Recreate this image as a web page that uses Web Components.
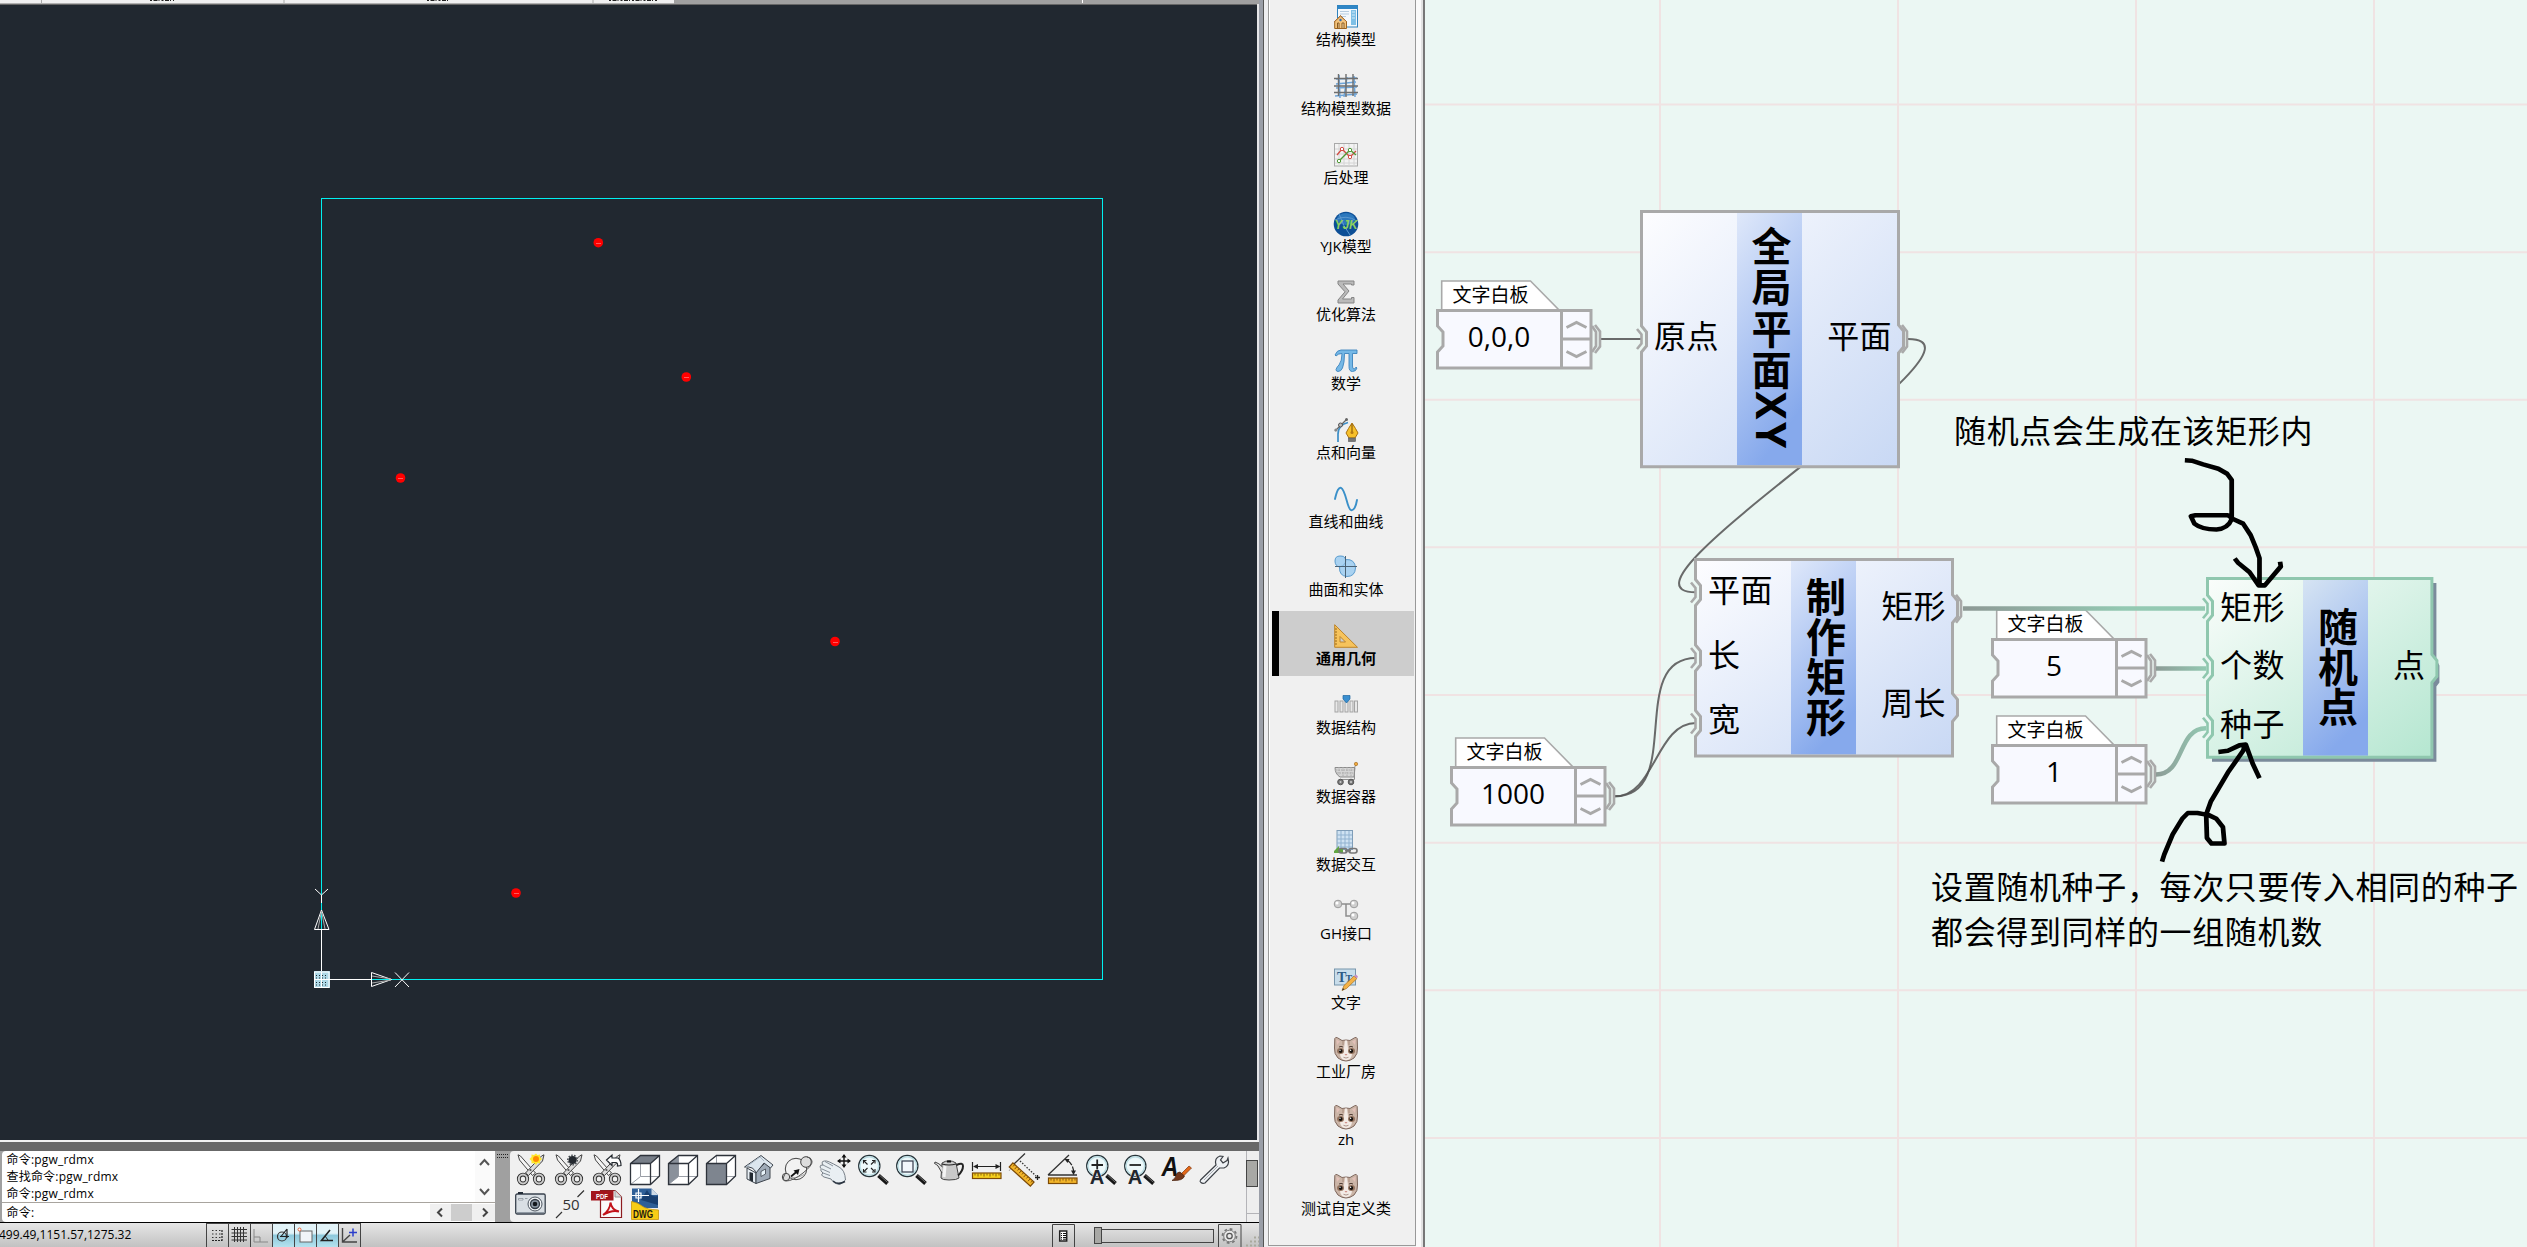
<!DOCTYPE html>
<html lang="zh-CN">
<head>
<meta charset="utf-8">
<title>随机点</title>
<style>
html,body{margin:0;padding:0;height:1247px;overflow:hidden;background:#f0f0f0}
body{font-family:"Open Sans","Noto Sans CJK SC",sans-serif;color:#000}
</style>
</head>
<body>
<app-shell></app-shell>
<script>
const define=(name,html,setup)=>customElements.define(name,class extends HTMLElement{
  connectedCallback(){
    if(this.shadowRoot)return;
    const r=this.attachShadow({mode:'open'});
    r.innerHTML=typeof html==='function'?html(this):html;
    if(setup)setup(this,r);
  }
});

/* ---------- icons ---------- */
const cat=`<path d="M.8 1.500Q1.500-.3 3.500 .8L8 3.500Q12 2.500 16 3.500L20.500 .8Q22.500-.3 23.200 1.500L23.500 11Q24 17 20 21Q16 24 12 24Q8 24 4 21Q0 17 .5 11Z" fill="#cbb5a7" stroke="#7d665c" stroke-width="1"/><path d="M2.300 2.500L6 4.500L3 8ZM21.700 2.500L18 4.500L21 8Z" fill="#e2c0b8"/><path d="M11 3.500H13L14 11Q15 15 18 17.500Q17 23 12 23.300Q7 23 6 17.500Q9 15 10 11Z" fill="#f3ebe6"/><path d="M9 3.500V8M15 3.500V8" stroke="#a58a7b" stroke-width="1"/><ellipse cx="6.500" cy="14" rx="3.500" ry="3" fill="#94745f"/><ellipse cx="17.500" cy="14" rx="3.500" ry="3" fill="#94745f"/><circle cx="6.700" cy="14" r="1.900" fill="#16110e"/><circle cx="17.300" cy="14" r="1.900" fill="#16110e"/><circle cx="6" cy="13.200" r=".7" fill="#fff"/><circle cx="16.600" cy="13.200" r=".7" fill="#fff"/><path d="M5 10Q7 8.800 9 10M15 10Q17 8.800 19 10" stroke="#4f3c33" fill="none" stroke-width="1"/><path d="M10.500 17H13.500L12 18.700Z" fill="#d08a84"/><path d="M9.500 20.300Q12 21.800 14.500 20.300" stroke="#a48a80" fill="none" stroke-width=".9"/>`;
const side={
model:`<rect x="3.500" y=".5" width="20" height="21.500" fill="#f4f9fd" stroke="#2f82bd"/><rect x="3.500" y=".5" width="20" height="3.500" fill="#2f86c6"/><path d="M6 6.500H15M6 9H15M6 11.500H12" stroke="#b7cde0"/><rect x="17" y="5" width="5" height="15" fill="#7fc0e6"/><path d="M18 7H21M18 10H21M18 13H21" stroke="#d4ecf9"/><path d="M.7 23.500V16.500L6.500 11L12.500 16.500V23.500Z" fill="#f3c37c" stroke="#9c6420"/><path d="M0 17L6.500 10.500L13 17" stroke="#a9713a" fill="none"/><path d="M3.500 23V18H5V23M8 23V18H10V23" stroke="#8a5a20" fill="#f9e0b0"/><circle cx="6.500" cy="15" r="1.200" fill="#2c68b0"/>`,
grid:`<path d="M2 5L23 4M2 14L23 13M1 22L23 20M5 1L6 24M13 3L10 23M20 2L21 23M2 10L22 8" stroke="#6da4d8" stroke-width="1.500"/><path d="M4.500 0V22M12 0V23M19 0V22M0 4.500H24M0 12H24M0 18.500H24" stroke="#6e6e6e" stroke-width="1.400"/>`,
post:`<rect x=".5" y=".5" width="23" height="22.500" fill="#f3f3f3" stroke="#a9a9a9"/><path d="M5 1V23M10 1V23M15 1V23M20 1V23M1 6H23M1 11H23M1 16H23M1 20H23" stroke="#d4d4d4"/><path d="M3 12L8 6L16 14L22 8" stroke="#d24b44" fill="none" stroke-width="1.300"/><path d="M5 18L16 7L22 12" stroke="#4f9a35" fill="none" stroke-width="1.300"/><g fill="#fff"><circle cx="8" cy="6" r="1.700" stroke="#d24b44"/><circle cx="16" cy="14" r="1.700" stroke="#d24b44"/><circle cx="5" cy="18" r="1.700" stroke="#4f9a35"/><circle cx="16" cy="7" r="1.700" stroke="#4f9a35"/></g>`,
yjk:`<circle cx="12" cy="12" r="12.300" fill="#0d4f96"/><ellipse cx="12" cy="7" rx="9" ry="6" fill="#2c78bd"/><path d="M1 8Q12 2 23 9M5 2Q9 14 16 23" stroke="#5b98cf" fill="none"/><text x="12" y="16.500" text-anchor="middle" textLength="23" lengthAdjust="spacingAndGlyphs" font-family="Liberation Sans" font-style="italic" font-weight="700" font-size="13" fill="#8ed05f">YJK</text>`,
sigma:`<path d="M4 1H20V5H17.500V4H9L15 11L8.500 19H17.500V17.500H20V23H4V20L11 11.800L4 4Z" fill="#bababa" stroke="#858585"/>`,
pi:`<path d="M1 6Q3 1 7 1H23V4.500H18.500V17Q18.500 20 20 20Q21.500 20 22 18L23 19Q22 22.500 18.500 22.500Q15 22.500 15 17.500V4.500H10.500Q10.500 14 8.500 19Q7 22.500 4 22.500Q2 22.500 2 20.500Q3 17.500 5 16Q8 12 8 4.500Q4 4.500 2 7Z" fill="#75b8e6" stroke="#3c83bd" stroke-width=".9"/>`,
pen:`<path d="M4 24V16Q4 7 14 4.500" stroke="#3c8ec7" fill="none" stroke-width="1.700"/><path d="M1 13L13 1" stroke="#666" stroke-width="1.300"/><circle cx="1.800" cy="12" r="1.500" fill="#888"/><circle cx="6.500" cy="7" r="2" fill="#bbb" stroke="#555"/><circle cx="12.500" cy="1.500" r="1.500" fill="#666"/><path d="M18 5Q22 11 24 15L21 20H15L12 15Q14 11 18 5Z" fill="#f7c02b" stroke="#a9700f"/><path d="M18 6V14" stroke="#7a4d06"/><circle cx="18" cy="14.500" r="1.500" fill="#b57a14"/><rect x="14.500" y="20" width="7" height="3.500" fill="#777" stroke="#555" stroke-width=".6"/>`,
sine:`<path d="M1 12C3 3 5 0 7 .8C12 3 13 22 17 23.200C20 24 22 19 23 13" stroke="#3a90c9" fill="none" stroke-width="1.900" stroke-linecap="round"/>`,
solid:`<path d="M1 6Q1 1 6 1Q10 0 12 4.500Q21 4 21.500 13Q21 21.500 13 21.500Q5 21 5.500 12Q1 11 1 6Z" fill="#a9d2f1" stroke="#5a9cce"/><path d="M6 12Q12 10 12 4.500" stroke="#7ab2dc" fill="none"/><path d="M11.500 1V23M1 11.500H23" stroke="#4a6275"/>`,
tri:`<path d="M.7 .7V23.300H23.500Z M6 12.500V18H11.500Z" fill="#f6c35c" fill-rule="evenodd" stroke="#bd842a"/><path d="M1 5H3M1 8H3M1 11H3M1 14H3M1 17H3M1 20H3" stroke="#9c6a18"/>`,
struct:`<g fill="#e8e8e8" stroke="#a4a4a4"><rect x="1" y="8" width="3" height="11"/><rect x="6" y="8" width="3" height="11"/><rect x="11" y="8" width="3" height="11"/><rect x="16" y="8" width="3" height="11"/><rect x="20.500" y="8" width="3" height="11"/></g><path d="M9 2.500H16V6L12.500 10L9 6Z" fill="#3a8fd0" stroke="#1d669f" stroke-width=".7"/>`,
cart:`<path d="M1 5.500H21L20 15H6Q1 12 1 5.500Z" fill="#d5d5d5" stroke="#8b8b8b"/><path d="M2 8H20M3 11H20M5 5V13M9 5V15M13 5V15M17 5V15" stroke="#aaa" stroke-dasharray="1.500 1"/><path d="M22 2.500L20.500 5.500V17.500H5" stroke="#8f8f8f" fill="none"/><circle cx="22" cy="2" r="1.700" fill="#f0a93c" stroke="#a8722c" stroke-width=".7"/><circle cx="6.500" cy="20" r="2.800" fill="#777" stroke="#555"/><circle cx="17" cy="20" r="2.800" fill="#777" stroke="#555"/><circle cx="6.500" cy="20" r="1" fill="#ccc"/><circle cx="17" cy="20" r="1" fill="#ccc"/>`,
inter:`<rect x="3" y=".5" width="15.500" height="19" fill="#cfe2f2" stroke="#7f9db8"/><path d="M7 1V19M11 1V19M15 1V19M3 5H18M3 9H18M3 13H18M3 17H18" stroke="#91b2d0"/><path d="M0 21L5 16V18.500H9V23H0Z" fill="#63a643"/><g fill="none" stroke="#777" stroke-width="1.700"><rect x="5" y="18.500" width="8" height="4.500" rx="2.200"/><rect x="15" y="18.500" width="8" height="4.500" rx="2.200"/><path d="M11 20.800H17"/></g>`,
gh:`<path d="M4 5H20M12 5V17H19" stroke="#8d8d8d" fill="none" stroke-width="1.500"/><g fill="#cfcfcf" stroke="#9b9b9b"><circle cx="4" cy="5" r="3.800"/><circle cx="20" cy="5" r="3.800"/><circle cx="20" cy="17" r="3.800"/></g><g fill="#fff"><circle cx="3" cy="4" r="1.500"/><circle cx="19" cy="4" r="1.500"/><circle cx="19" cy="16" r="1.500"/></g>`,
text:`<rect x=".5" y="1" width="21" height="16" fill="#c8ddeb" stroke="#7795ac"/><text x="3" y="14" font-family="Liberation Serif" font-weight="700" font-size="14" fill="#2b5a86">T</text><text x="11.500" y="14" font-family="Liberation Serif" font-weight="700" font-size="10" fill="#2b5a86">T</text><path d="M8 22.500L10 17.500L20 8L23 10.500L12.500 20.500Z" fill="#f4b247" stroke="#a8701c" stroke-width=".7"/><path d="M20 8L22 6.500L24 8.500L23 10.500Z" fill="#c48ec4"/><path d="M8 22.500L9 20L10.300 21.500Z" fill="#333"/>`,
cat
};
const scis=`<g stroke-linejoin="round"><path d="M3 .8L5.500 2L20.500 19L17.500 21.500L4.500 6Z" fill="#f4f4f4" stroke="#333" stroke-width=".9"/><path d="M29 .8L26.500 2L10.500 19L13.500 21.500L27.500 7Z" fill="#dcdcdc" stroke="#333" stroke-width=".9"/><circle cx="15.500" cy="16" r="1.100" fill="#555"/><g fill="none"><ellipse cx="8" cy="25" rx="4.200" ry="4.400" stroke="#333" stroke-width="3.800"/><ellipse cx="8" cy="25" rx="4.200" ry="4.400" stroke="#ccc" stroke-width="2"/><ellipse cx="24" cy="25" rx="4.200" ry="4.400" stroke="#333" stroke-width="3.800"/><ellipse cx="24" cy="25" rx="4.200" ry="4.400" stroke="#ccc" stroke-width="2"/></g></g>`;
const cube=(f)=>`<path d="M1.500 9.500L11.500 1.500H30.500V22L21.500 30.500H1.500Z" fill="#fff"/><path d="M11.500 1.500V22.500M1.500 30.500L11.500 22.500H30.500" stroke="#9a9ea6" fill="none"/>${f}<path d="M1.500 9.500L11.500 1.500H30.500V22L21.500 30.500H1.500ZM1.500 9.500H21.500V30.500M21.500 9.500L30.500 1.500" fill="none" stroke="#2e333b" stroke-width="1.300"/>`;
const lens=`<path d="M21.500 21.500L30.500 29.500" stroke="#161616" stroke-width="4"/><path d="M22.500 21.200L30.500 28.400" stroke="#777" stroke-width=".9"/><circle cx="12.300" cy="12" r="10.600" fill="#edf8fa" stroke="#27343a" stroke-width="1.300"/><circle cx="12.300" cy="12" r="9.300" fill="none" stroke="#bcdde3" stroke-width="1.400"/>`;
const ruler=(c)=>`<rect x="1.500" y="21.500" width="28.500" height="5.500" fill="${c}" stroke="#7d4a05" stroke-width="1.200"/><path d="M4 22V24M7 22V25M10 22V24M13 22V25M16 22V24M19 22V25M22 22V24M25 22V25M28 22V24" stroke="#6b4408" stroke-width=".8"/>`;
const tool={
s1:scis+`<path d="M21-.5L22.500 1L25 .5L25 3L27 5L25 7V9.500L22.500 9L21 11L19 9L16.500 9.500V7L14.500 5L16.500 3V.5L19 1Z" fill="#ffe82e"/><circle cx="21" cy="5" r="3" fill="#ff8a00"/>`,
s2:scis+`<circle cx="19.500" cy="6" r="4" fill="#23282e"/><circle cx="19.500" cy="6" r="4.700" fill="none" stroke="#454b50" stroke-width="1.500" stroke-dasharray="1.500 1.400"/>`,
s3:scis+`<path d="M15.500 6L21 1V4H27Q30 6 30 11.500L26.500 12Q27 9 25 8.500H21V11.500Z" fill="#fff" stroke="#23282e" stroke-width="1.200"/>`,
c1:cube('<path d="M1.500 9.500L11.500 1.500H30.500L21.500 9.500Z" fill="#777e88"/>'),
c2:cube('<path d="M1.500 9.500L11.500 1.500V22.500L1.500 30.500Z" fill="#8a919b"/>'),
c3:cube('<path d="M1.500 9.500H21.500V30.500H1.500Z" fill="#7e858f"/>'),
house:`<path d="M4 14V25L13 29.500V19Z" fill="#e6edf3" stroke="#3d444d"/><path d="M13 29.500V18L22 9L27 13V24.500Z" fill="#9fabb8" stroke="#3d444d"/><path d="M1.500 13L18 1.500L30 11L27.500 14L21 9L13 19Q11 12 1.500 13Z" fill="#dce6ee" stroke="#3d444d"/><path d="M3 13L17 3L21 7" fill="none" stroke="#aab8c5"/><path d="M6.500 18L10 19V28L6.500 26Z" fill="#222931"/><path d="M18 17.500L22.500 15V20L18 22.500Z" fill="#e8f4fb" stroke="#3d444d" stroke-width=".8"/>`,
orbit:`<circle cx="15" cy="15" r="10.700" fill="#f2f2f2" stroke="#444"/><path d="M6 22Q14 26 24 20" fill="none" stroke="#aaa"/><circle cx="25" cy="8" r="5.300" fill="#ddd" stroke="#444"/><circle cx="5" cy="23" r="3.700" fill="#ddd" stroke="#444"/><path d="M4 20Q0 27 5 27Q12 27 22 19T31 7Q30 3 26 3" fill="none" stroke="#555"/><path d="M10 22.500L16 17.500" stroke="#111" stroke-width="1.700"/><path d="M18.500 15L12.500 16.500L17 21Z" fill="#111"/>`,
hand:`<path d="M1 13Q1 10.500 4 11L3 9Q3 7 5.500 7L6 7Q8 6 20 13Q26 16 26.500 26L21 30.500Q15 30 12 25L5 23Q1 21 4 19Q1 17 2 14.500Z" fill="#e9eff3" stroke="#6a737c" stroke-width=".9"/><path d="M4 11L12 15M3 15L11 18.500M4 19L11 21.500M6 7.500L14 12" stroke="#7c858e" fill="none" stroke-width=".9"/><path d="M14 27Q19 31.500 26 27.500" stroke="#2b3440" fill="none" stroke-width="1.500"/><path d="M25 1V13M19 7H31" stroke="#111" stroke-width="1.400"/><path d="M25 0L22.500 3.500H27.500ZM25 14L22.500 10.500H27.500ZM18 7L21.500 4.500V9.500ZM32 7L28.500 4.500V9.500Z" fill="#111"/>`,
ze:lens+`<path d="M7 7L10.500 10.500M14 14L17.500 17.500M17.500 7L14 10.500M10.500 14L7 17.500" stroke="#222" stroke-width="1.100"/><path d="M6.500 9.500V6.500H9.500M15 6.500H18V9.500M18 15V18H15M9.500 18H6.500V15" fill="none" stroke="#222" stroke-width="1.100"/>`,
zw:lens+`<rect x="7" y="7" width="11" height="11" fill="#f3f6fb" stroke="#33394a" stroke-width="1.200"/>`,
pot:`<path d="M9 9Q16 4.500 23 9L26 24Q24 26 16 26Q9 26 8 24Z" fill="#c9c9c9" stroke="#444"/><path d="M9 19L5 12Q3 10 1.500 9.500L2 8Q6 9 9.500 13" fill="#ddd" stroke="#444"/><path d="M23.500 11Q30 8 30 12Q30 17 25 21.500" fill="none" stroke="#222" stroke-width="2"/><path d="M9 10Q16 12 23 10" stroke="#222" fill="none" stroke-width="1.200"/><rect x="14" y="6.500" width="4" height="2" fill="#111"/><path d="M12 12L11 23" stroke="#f4f4f4" stroke-width="3"/>`,
dim:`<path d="M1.500 8V17M29.500 8V17M3 12.500H28" stroke="#222" stroke-width="1.200"/><path d="M2 12.500L7 10V15ZM29.500 12.500L24.500 10V15Z" fill="#222"/><g transform="translate(0 -2.500)">${ruler('#f6cf1d')}</g>`,
dim2:`<path d="M5 10L16 -.5" stroke="#333" stroke-width="1.300"/><path d="M0 17L5 10" stroke="#aaa"/><path d="M11 7L27 22" stroke="#333" stroke-width="1.300" stroke-dasharray="1.500 1.500"/><path d="M26 23.500H31M28.500 21V26" stroke="#222" stroke-width="1.300"/><g transform="rotate(42 4 11) translate(1 -12)">${ruler('#f3b52a')}</g>`,
ang:`<path d="M1 21H30M1 21L22 1" stroke="#333" stroke-width="1.300" fill="none"/><path d="M20 6Q27 11 26.500 19" fill="none" stroke="#222" stroke-width="1.200" stroke-dasharray="7 1.500"/><path d="M17.500 5L22.500 5L20.500 9ZM24 16.500H29L26.500 21Z" fill="#222"/><g transform="translate(0 2.500)">${ruler('#f3b52a')}</g>`,
za:lens+`<path d="M6.500 11H18M12.200 5.500V16.500" stroke="#222" stroke-width="1.800"/><text x="12" y="30" text-anchor="middle" font-family="Liberation Sans" font-weight="700" font-size="20" fill="#22262d" stroke="#f0f0f0" stroke-width="1" paint-order="stroke">A</text>`,
zb:lens+`<path d="M6.500 11H18" stroke="#222" stroke-width="1.800"/><text x="12" y="30" text-anchor="middle" font-family="Liberation Sans" font-weight="700" font-size="20" fill="#22262d" stroke="#f0f0f0" stroke-width="1" paint-order="stroke">A</text>`,
ab:`<text x="9" y="22" text-anchor="middle" font-family="Liberation Sans" font-style="italic" font-weight="700" font-size="27" textLength="17" lengthAdjust="spacingAndGlyphs" fill="#111">A</text><path d="M20 20L28 12L30.500 14L22.500 22Z" fill="#e36717" stroke="#7b3510" stroke-width=".7"/><path d="M19 18L23.500 22Q22 27 11 26.500Q15 24 15 21Q16 18 19 18Z" fill="#74371a" stroke="#48200c" stroke-width=".7"/>`,
wrench:`<path d="M1.500 26L17 11Q15 4 21 2L24 2.500L21.500 6L24 9L28 6.500L29 4Q31 12 25 14L20.500 14L6 29Q3.500 30 2 28.500Q.5 27.500 1.500 26Z" fill="#eef1f4" stroke="#3c4046" stroke-width="1.200"/><path d="M5 26L19 12" stroke="#a9adb3"/>`,
cam:`<rect x=".7" y="6" width="29.500" height="20" rx="1.500" fill="#d9dfe4" stroke="#39424d" stroke-width="1.300"/><path d="M3 6V4H8V6Z" fill="#222b36"/><path d="M1.500 24.500H29.500" stroke="#909aa4"/><path d="M3.500 10.500H8V12H3.500ZM10 10.500H12.500" stroke="#7b858f" fill="#fff" stroke-width=".7"/><circle cx="20" cy="16" r="7" fill="#f3f5f7" stroke="#4a535d"/><circle cx="20" cy="16" r="4.500" fill="#8c97a3" stroke="#323a44" stroke-width="1.300"/><circle cx="20" cy="16" r="2.300" fill="#14181d"/>`,
fifty:`<path d="M3 30L9 24M24.500 9L31 2.500" stroke="#333" stroke-width="1.200"/><text x="18" y="22" text-anchor="middle" font-family="Open Sans" font-size="15" fill="#333">50</text>`,
pdf:`<path d="M9.500 2.500H24L30.500 9V29.500H9.500Z" fill="#fbfbfb" stroke="#8d1b1f" stroke-width="1.200"/><path d="M24 2.500V9H30.500" fill="#ddd" stroke="#999"/><rect x="0" y="3" width="22.500" height="9.500" fill="#a3151c"/><text x="11" y="10.500" text-anchor="middle" textLength="12" lengthAdjust="spacingAndGlyphs" font-family="Liberation Sans" font-weight="700" font-size="7.500" fill="#fff">PDF</text><path d="M12 27Q19 22 19.500 14.500Q20.500 22 28 23.500Q21 21.500 12 27Z" fill="none" stroke="#c3131a" stroke-width="1.900"/>`,
dwg:`<path d="M3 .5H22.500L29 7V20H3Z" fill="#2f5f97"/><path d="M22.500 .5V7H29Z" fill="#cfdae6"/><path d="M12 12L29 17V8Q22 10 18 2Z" fill="#193f70"/><path d="M2.500 13.500Q9 14.500 13 18T29.500 22V31.500H2.500Z" fill="#f8cd16" stroke="#c9960c" stroke-width=".8"/><path d="M9.500 1V14M3 7.500H20M7 5H12V10H7Z" fill="none" stroke="#fff" stroke-width="1.200"/><text x="14" y="30" text-anchor="middle" textLength="20" lengthAdjust="spacingAndGlyphs" font-family="Liberation Sans" font-weight="700" font-size="10.500" fill="#1c1a10">DWG</text>`
};
define('tool-icon',el=>`<style>:host{display:block;width:32px;height:32px;margin:1px 3px}svg{display:block;overflow:visible}</style><svg width="32" height="32" viewBox="0 0 32 32">${tool[el.getAttribute('name')]}</svg>`);

define('side-item',el=>`<style>
:host{display:flex;flex-direction:column;align-items:center;box-sizing:border-box;height:65px;flex:none;margin:0 1.500px 3.750px 2.500px;padding:13px 0 0 7px;font-size:15px;line-height:22px}
:host([on]){background:#cdcdcd;box-shadow:inset 7px 0 #000;font-weight:700}
svg{display:block;overflow:visible;flex:none}div{height:22px;white-space:nowrap;margin-top:-1px}
</style><svg width="24" height="24" viewBox="0 0 24 24">${side[el.getAttribute('icon')]}</svg><div><slot></slot></div>`);

define('side-palette',`<style>
:host{display:flex;width:161px;height:1247px;background:#f0f0f0;flex:none}
.edge{width:4px;background:#eeeef0}
.box{box-sizing:border-box;width:148px;height:1246px;border:1px solid #999;border-width:0 1.500px 1.500px 1.500px;box-shadow:inset 1px 0 #fff;display:flex;flex-direction:column;overflow:hidden}
.box>:first-child{margin-top:-7.700px}
.r{flex:1;background:linear-gradient(90deg,#fafafa 0 5px,#e2e2e2 5px 7px,#777 7px)}
</style><div class="edge"></div><div class="box">${[['model','结构模型'],['grid','结构模型数据'],['post','后处理'],['yjk','YJK模型'],['sigma','优化算法'],['pi','数学'],['pen','点和向量'],['sine','直线和曲线'],['solid','曲面和实体'],['tri','通用几何'],['struct','数据结构'],['cart','数据容器'],['inter','数据交互'],['gh','GH接口'],['text','文字'],['cat','工业厂房'],['cat','zh'],['cat','测试自定义类']].map(([i,t])=>`<side-item icon="${i}"${i==='tri'?' on':''}>${t}</side-item>`).join('')}</div><div class="r"></div>`);

/* ---------- CAD side ---------- */
define('cad-view',`<style>:host{display:block;height:1140px;background:#212830}svg{display:block}</style>
<svg width="1259" height="1140" viewBox="0 0 1259 1140">
<rect width="674" height="3" fill="#f0f0f0"/><rect x="674" width="585" height="4" fill="#a0a0a0"/><rect y="3" width="674" height="1" fill="#b0b0b0"/>
<rect y="4" width="1259" height="1" fill="#666"/><path d="M41.500 0V3M284 0V3M593 0V3" stroke="#aaa"/><path d="M1082.500 0V3" stroke="#fff"/>
<path d="M150 .5H174M427 .5H450M609 .5H657" stroke="#222" stroke-width="1.200" stroke-dasharray="2 1.500 4 1 1 2"/>
<rect x="1257" y="4" width="2" height="1136" fill="#e6e6e8"/>
<rect x="321.500" y="198.500" width="781" height="781" fill="none" stroke="#00f0f0" shape-rendering="crispEdges"/>
<g fill="#f00"><circle cx="598.300" cy="242.700" r="4.800"/><circle cx="686.300" cy="377" r="4.800"/><circle cx="400.500" cy="478" r="4.800"/><circle cx="835" cy="641.500" r="4.800"/><circle cx="516" cy="893" r="4.800"/></g>
<g fill="#ff5a5a"><rect x="596" y="243" width="5" height="1"/><rect x="684" y="377" width="5" height="1"/><rect x="398" y="478" width="5" height="1"/><rect x="833" y="642" width="5" height="1"/><rect x="514" y="893" width="5" height="1"/></g>
<g stroke="#fff" fill="none" stroke-width="1"><path d="M321.500 929V972M321.500 895V903M330 979.500H372"/><path d="M315 889L321.500 895L328 889"/><path d="M321.500 910L314.500 929.500H329Z"/><path d="M321.500 911L318 929M321.500 911L325 929" stroke="#aaa"/><path d="M371.500 972.500V986.500L391.500 979.500Z"/><path d="M372 976L391 979M372 983L391 980" stroke="#aaa"/><path d="M395 972.500L409 987M409 972.500L395 987"/></g>
<rect x="314" y="971" width="16" height="17" fill="#add8e6"/><path d="M314.500 972V987.500H329V972ZM321.500 972V988M314 979.500H330" stroke="#fff" fill="none"/>
<path d="M316 975.500H328M316 978H328M316 982.500H328M316 985H328" stroke="#1a2a33" stroke-dasharray="1 2"/>
</svg>`);

define('command-box',`<style>
:host{display:grid;grid-template-columns:2px 1fr;width:495px;height:71px;background:#a0a0a0;flex:none;font-size:12px;letter-spacing:.2px}
.b{background:#fff;border-radius:4px 0 0 4px;display:flex;flex-direction:column}
.top{height:52px;display:flex;justify-content:space-between;border-bottom:1px solid #a8a49e;box-sizing:border-box}
.l{padding:0 0 0 4.500px;line-height:17px;white-space:nowrap}.l div{height:17px}
.sc{width:20px;background:#fafafa}.bot{height:19px;display:flex;justify-content:space-between;line-height:19px}
svg{display:block}
</style><i></i><div class="b"><div class="top"><div class="l"><div>命令:pgw_rdmx</div><div>查找命令:pgw_rdmx</div><div>命令:pgw_rdmx</div></div>
<svg class="sc" width="20" height="51"><path d="M5 14L9.500 9L14 14M5 38L9.500 43L14 38" fill="none" stroke="#555" stroke-width="2"/></svg></div>
<div class="bot"><div class="l" style="line-height:19px;padding-top:0">命令:</div><svg width="65" height="18"><rect y="1" width="65" height="17" fill="#f0f0f0"/><rect x="21" y="1" width="21" height="17" fill="#cdcdcd"/><path d="M12 5.500L8 9.500L12 13.500M53 5.500L57 9.500L53 13.500" fill="none" stroke="#444" stroke-width="2"/></svg></div></div>`);

define('tool-bar',`<style>
:host{display:flex;flex:1;background:#a0a0a0;height:71px}
.grip{width:15px;height:71px;display:block}
.in{flex:1;background:#f0f0f0;border-radius:4px 0 0 4px;padding:2px 0 0 2px}
.row{display:flex;height:34px}
.sb{display:block}
</style><svg class="grip" width="15" height="71"><path d="M2 3.500H14M2 6.500H14" stroke="#222" stroke-dasharray="1 1"/></svg><div class="in">
<div class="row">${'s1 s2 s3 c1 c2 c3 house orbit hand ze zw pot dim dim2 ang za zb ab wrench'.split(' ').map(n=>`<tool-icon name="${n}"></tool-icon>`).join('')}</div>
<div class="row">${'cam fifty pdf dwg'.split(' ').map(n=>`<tool-icon name="${n}"></tool-icon>`).join('')}</div></div>
<svg class="sb" width="13" height="71"><rect width="13" height="71" fill="#eee"/><path d="M.5 0V71M0 62.500H13" stroke="#b4b4b8"/><rect x=".5" y="9.500" width="11" height="26" fill="#a8a8a5" stroke="#444"/></svg>`);

define('status-toggle',el=>`<style>:host{display:block;width:21px;height:23px;border-left:1px solid #444;background:${el.hasAttribute('on')?'linear-gradient(#e2f3f8 40%,#8ec9dc 50%,#b5e2ee)':'none'}}svg{display:block}</style><svg width="21" height="23" viewBox="0 0 21 23">${{
a:'<path d="M5 6.500H14M5 10H14M5 13.500H14" stroke="#333" stroke-dasharray="1.500 2"/><path d="M5 16.500H15M15 6V17" stroke="#222" stroke-width="1.200" stroke-dasharray="2 1"/>',
b:'<path d="M2.500 5.500H18M2.500 9H18M2.500 12.500H18M2.500 16H18M5.500 3V18M8.500 3V18M11.500 3V18M14.500 3V18" stroke="#333" stroke-width="1"/>',
c:'<path d="M3 5V18H17M3 13H9V18" fill="none" stroke="#888"/>',
d:'<circle cx="9" cy="12.500" r="4.500" fill="none" stroke="#333" stroke-width="1.200"/><path d="M7 12.500H16M14 5V14M14 5L8 12.500" fill="none" stroke="#222" stroke-width="1.200"/>',
e:'<rect x="5" y="7" width="12" height="11" fill="#f0f4f8" stroke="#666"/><circle cx="4.500" cy="5.500" r="1.500" fill="#fff" stroke="#e8633a"/>',
f:'<path d="M13 6L4.500 16.500H16" fill="none" stroke="#222" stroke-width="1.600"/><path d="M8 12L11 16" stroke="#222"/>',
g:'<path d="M3.500 4V18H18M3.500 18L11 11" fill="none" stroke="#444" stroke-width="1.400"/><path d="M10 8.500H18M14 4.500V12.500" stroke="#2b3ecb" stroke-width="1.500"/>'}[el.getAttribute('k')]}</svg>`);

define('status-bar',`<style>
:host{display:flex;height:24px;border-top:1px solid #000;background:linear-gradient(#e6e6e6,#c2c2c2);width:1259px;font-size:12px}
.c{width:206px;line-height:24px;white-space:nowrap;text-indent:-1px;overflow:hidden}
.t{display:flex;border-right:1px solid #444;border-top:1px solid #444;height:24px;flex:none;box-sizing:border-box}
.g{flex:1}svg{display:block}
</style><div class="c">499.49,1151.57,1275.32</div><div class="t">${[...'abcdefg'].map(k=>`<status-toggle k="${k}"${'def'.includes(k)?' on':''}></status-toggle>`).join('')}</div><div class="g"></div>
<svg width="208" height="24"><path d="M1.500 24V1.500H23.500V24M167.500 24V1.500H190V24" fill="none" stroke="#444"/><rect x="8.700" y="8" width="7" height="10" fill="#fff" stroke="#222" stroke-width="1.500"/><path d="M10 10.500H11M12 10.500H15M10 12.500H11M12 12.500H15M10 14.500H11M12 14.500H15M10 16.200H11M12 16.200H15" stroke="#111"/><rect x="50.500" y="6.500" width="112" height="13" fill="none" stroke="#444"/><rect x="43.500" y="4.500" width="7" height="16" fill="#a8a8a5" stroke="#444"/><g fill="none" stroke="#777"><circle cx="178.500" cy="13" r="7" stroke-width="1.800" stroke-dasharray="2.700 2.800"/><circle cx="178.500" cy="13" r="5.800" fill="#e8e8e8"/><circle cx="178.500" cy="13" r="2.700" stroke="#555" stroke-width="1.300"/></g><path d="M195 22.500H208M199 18.500H208M203 14.500H208" stroke="#a9a99d" stroke-width="2" stroke-dasharray="2 2"/></svg>`);

define('cad-window',`<style>:host{display:flex;flex-direction:column;width:1259px;flex:none}.w{height:2px;background:#f2f2f2}.d{height:9px;background:#686868}.row{display:flex;height:71px}</style>
<cad-view></cad-view><div class="w"></div><div class="d"></div><div class="row"><command-box></command-box><tool-bar></tool-bar></div><status-bar></status-bar>`);

/* ---------- node canvas ---------- */
const place=(el,r)=>{el.style.left=el.getAttribute('x')+'px';el.style.top=el.getAttribute('y')+'px'};
define('text-panel',`<style>
:host{position:absolute;display:flex;flex-direction:column;width:168px;height:91px}
svg{position:absolute;left:0;top:0;overflow:visible}
.tab{position:relative;height:29px;line-height:31px;font-size:19px;padding-left:16.500px;white-space:nowrap}
.val{position:relative;width:126px;height:60px;line-height:55px;font-size:28px;text-align:center}
</style><svg width="168" height="91"><path d="M5.700 30V1H94.500L123 30Z" fill="#fff" stroke="#a9a9a9" stroke-width="1.600"/>
<path d="M1.500 30.500H155V88H1.500V72L7 66V52L1.500 46Z" fill="#f8f9ff" stroke="#a9a9a9" stroke-width="3"/><path d="M125.500 30V88M125 59H155" stroke="#a9a9a9" stroke-width="3"/>
<path d="M130.500 47.500L140.500 42.500L150.500 47.500M130.500 71.500L140.500 76.500L150.500 71.500" fill="none" stroke="#a9a9a9" stroke-width="3"/>
<path d="M156 46L160 52V66L156 72M159 45L164 51.500V66.500L159 73" fill="none" stroke="#a9a9a9" stroke-width="2.600"/></svg>
<div class="tab">文字白板</div><div class="val"><slot></slot></div>`,place);

define('flow-node',el=>{
  const n=k=>+el.getAttribute(k),w=n('w'),h=n('h'),ins=el.getAttribute('in').split(',').map(Number),outs=el.getAttribute('out').split(',').map(Number);
  const g=el.hasAttribute('green'),c=g?'#8fc7ae':'#a9a9a9',L=1.5,R=w-1.500,id='g'+w+h;
  const shape=`M${L} 1.500H${R}`+outs.map(y=>`V${y-14}L${R+5} ${y-8}V${y+8}L${R} ${y+14}`).join('')+`V${h-1.500}H${L}`+[...ins].reverse().map(y=>`V${y+13}L${L+5} ${y+7}V${y-7}L${L} ${y-13}`).join('')+'Z';
  const linked=(el.getAttribute('linked')||'').split(',').filter(Boolean).map(Number);
  return `<style>
:host{position:absolute;display:grid;grid-template-columns:97px 65px 1fr;width:${w}px;height:${h}px;font-size:32px;--ls:.4px}
svg{position:absolute;left:0;top:0;overflow:visible}
.c{position:relative;display:flex;flex-direction:column;justify-content:space-around;box-sizing:border-box;padding:3px 0;letter-spacing:var(--ls);line-height:40px;white-space:nowrap}
::slotted([slot]){display:block;height:40px;transform:translateY(-2.700px)}
::slotted(b){font:700 42px/65px "Open Sans",sans-serif;letter-spacing:2.500px}
.i{padding-left:14px;align-items:flex-start}.o{padding-right:8px;align-items:flex-end}
.t{position:relative;display:flex;align-items:center;justify-content:center;writing-mode:vertical-rl;font:700 40px/65px "Noto Sans CJK SC",sans-serif;letter-spacing:${el.getAttribute('ls')||0}px;transform:translate(2px,-1.500px)}
.t div{white-space:nowrap}
</style><svg width="${w}" height="${h}"><defs><linearGradient id="${id}a" x1="0" y1="0" x2="1" y2="1"><stop offset="0" stop-color="${g?'#fafdfb':'#fdfdff'}"/><stop offset="1" stop-color="${g?'#b4e6d0':'#c8d8f4'}"/></linearGradient><linearGradient id="${id}b" x1="0" y1="0" x2=".35" y2="1"><stop offset="0" stop-color="${g?'#d6e4f3':'#dfe8fa'}"/><stop offset="1" stop-color="#86a9ec"/></linearGradient></defs>
${g?`<path d="M6 6H${w+3}V${outs[0]-9}L${w+6} ${outs[0]-3}V${outs[0]+14}L${w+3} ${outs[0]+18}V${h+3}H6Z" fill="#7b8b9b"/>`:''}
<path d="${shape}" fill="url(#${id}a)"/><rect x="97" y="3" width="65" height="${h-6}" fill="url(#${id}b)"/><path d="${shape}" fill="none" stroke="${c}" stroke-width="3"/>
${ins.map(y=>`<path d="M-3 ${y-10}L1.500 ${y-4.500}V${y+4.500}L-3 ${y+10}" fill="none" stroke="${c}" stroke-width="2.600"/>`).join('')}
${linked.map(y=>`<path d="M${w+2} ${y-14}L${w+7} ${y-7.500}V${y+7.500}L${w+2} ${y+14}" fill="none" stroke="${c}" stroke-width="2.600"/>`).join('')}</svg>
<div class="c i"><slot name="in"></slot></div><div class="t"><div><slot></slot></div></div><div class="c o"><slot name="out"></slot></div>`},place);

define('canvas-note',`<style>:host{position:absolute;font-size:32px;letter-spacing:.65px;line-height:44.700px;white-space:nowrap}</style><slot></slot>`,place);

const grid=[235,473,711,949].map(x=>`M${x} 0V1247`).join('')+[104.5,252.200,399.700,547.300,695,842.700,990.300,1138].map(y=>`M0 ${y}H1102`).join('');
define('node-canvas',`<style>:host{display:block;position:relative;flex:1;height:1247px;background:#ebf7f3;overflow:hidden}
.w{position:absolute;left:0;top:0}</style>
<svg class="w" width="1102" height="1247"><defs><linearGradient id="w" gradientUnits="userSpaceOnUse" x1="540" y1="0" x2="700" y2="0"><stop offset="0" stop-color="#8d9995"/><stop offset="1" stop-color="#93c9b2"/></linearGradient><linearGradient id="v" gradientUnits="userSpaceOnUse" x1="730" y1="0" x2="781" y2="0"><stop offset="0" stop-color="#8d9b96"/><stop offset="1" stop-color="#93c9b2"/></linearGradient></defs>
<path d="${grid}" stroke="#f0e3e3" stroke-width="2"/>
<g fill="none" stroke="#555" stroke-opacity=".87" stroke-width="2"><path d="M176 339H217"/><path d="M483 339C588 339 166 592.300 271 592.300"/><path d="M190 796.300C260 796.300 201 658 271 658"/><path d="M190 796.300C230 796.300 231 723 271 723"/></g></svg>
<text-panel x="11" y="280">0,0,0</text-panel><text-panel x="25" y="737">1000</text-panel><text-panel x="566" y="609.300">5</text-panel><text-panel x="566" y="715">1</text-panel>
<svg class="w" width="1102" height="1247"><g fill="none" stroke-width="4.500"><path d="M538 608.500L780 608.600" stroke="url(#w)"/><path d="M731 668.500L781 668.600" stroke="url(#v)"/><path d="M731 774.500C760 774.500 752 728.300 781 728.300" stroke="url(#v)"/></g></svg>
<flow-node x="215" y="210" w="260" h="258.300" in="129" out="129" linked="129" ls="1.500"><span slot="in">原点</span>全局平面<b>XY</b><span slot="out">平面</span></flow-node>
<flow-node x="269" y="558" w="260" h="199.400" in="34.500,100,165.500" out="50.700,149.500" linked="50.700"><span slot="in">平面</span><span slot="in">长</span><span slot="in">宽</span>制作矩形<span slot="out">矩形</span><span slot="out">周长</span></flow-node>
<flow-node green x="781" y="577.400" w="227.400" h="181.700" in="31.200,91.200,150.800" out="91.500"><span slot="in">矩形</span><span slot="in">个数</span><span slot="in">种子</span>随机点<span slot="out">点</span></flow-node>
<canvas-note x="529" y="409">随机点会生成在该矩形内</canvas-note>
<canvas-note x="506" y="865">设置随机种子，每次只要传入相同的种子<br>都会得到同样的一组随机数</canvas-note>
<svg class="w" width="1102" height="1247"><g transform="translate(504 400) scale(.38074 .36352)" fill="none" stroke="#000" stroke-width="12.500" stroke-linejoin="round"><path d="M672 166L690 167L720 177L760 189L783 203L795 220V328Q785 354 755 356Q715 356 697 340L688 320L700 317H785L800 328L825 340L845 372L858 405L868 435V510M803 436L812 448L842 474L866 510H882L924 458L922 445"/><path d="M612 1270L618 1250L640 1195L665 1152L680 1136H705L735 1142L755 1152L772 1175L776 1220H742L730 1205L728 1140L740 1105L785 1025L825 965L830 950M760 968L785 965L815 950L832 948L850 1000L868 1040"/></g></svg>`);

define('app-shell',`<style>:host{display:flex;width:2527px;height:1247px}.s{width:5px;flex:none;background:linear-gradient(90deg,#9a9ea7 0 3.500px,#555 3.500px 5px)}</style>
<cad-window></cad-window><div class="s"></div><side-palette></side-palette><node-canvas></node-canvas>`);
</script>
</body>
</html>
